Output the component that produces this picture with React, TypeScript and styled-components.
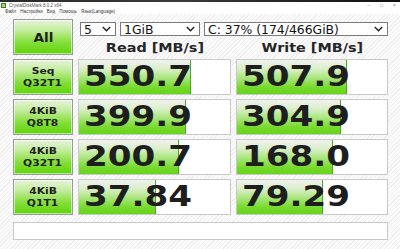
import React from "react";
import styled, { createGlobalStyle } from "styled-components";

const Global = createGlobalStyle`
  html, body { margin: 0; padding: 0; }
  body {
    width: 400px;
    height: 249px;
    overflow: hidden;
    background: #ffffff;
    font-family: "DejaVu Sans", Verdana, sans-serif;
  }
`;

const Window = styled.div`
  width: 400px;
  height: 249px;
  display: flex;
  flex-direction: column;
  background: #ffffff;
  overflow: hidden;
`;

const TopStrip = styled.div`
  height: 2px;
  background: linear-gradient(to right, #2a2a2a, #3a3a3a 45%, #101010);
`;

const TitleBar = styled.div`
  height: 6px;
  display: flex;
  align-items: center;
  padding: 0 4px 0 1px;
  gap: 3px;
  font-family: "Liberation Sans", Arial, sans-serif;
  font-size: 4.5px;
  color: #555;
`;

const TitleText = styled.span`
  flex: 1;
  white-space: nowrap;
`;

const WinControls = styled.div`
  display: flex;
  gap: 10px;
  color: #888;
  font-size: 5px;
`;

const MenuBar = styled.div`
  height: 6px;
  display: flex;
  align-items: center;
  padding-left: 5px;
  gap: 4px;
  font-family: "Liberation Sans", Arial, sans-serif;
  font-size: 4.6px;
  color: #333;
`;

const MenuItem = styled.span`
  white-space: nowrap;
`;

const Main = styled.div`
  flex: 1;
  display: grid;
  grid-template-columns: 60px 153px 152px;
  grid-template-rows: 17px 15px 36px 36px 36px 36px 21px;
  column-gap: 5px;
  row-gap: 4px;
  padding: 5px 12px 0 13px;
  background-color: #f7f7f7;
  background-image: repeating-linear-gradient(
    135deg,
    #fbfbfb 0px,
    #fbfbfb 2px,
    #efefef 2px,
    #efefef 3px
  );
`;

const GreenButton = styled.div<{ $span?: boolean }>`
  grid-row: ${(p) => (p.$span ? "1 / span 2" : "auto")};
  box-sizing: border-box;
  border: 1px solid #9a9a9a;
  box-shadow: inset 0 0 0 1px rgba(255, 255, 255, 0.55);
  background: linear-gradient(
    to bottom,
    #e6f4dc 0%,
    #c4ec9e 30%,
    #86df3c 65%,
    #5fd40a 100%
  );
  display: flex;
  flex-direction: column;
  align-items: center;
  justify-content: center;
  color: #1f1f1f;
  font-weight: bold;
`;

const AllText = styled.span`
  font-size: 13px;
  transform: scaleX(1.05);
`;

const LabelLine = styled.span`
  font-size: 8.6px;
  line-height: 12px;
  transform: scaleX(1.25);
`;

const SelectRow = styled.div`
  grid-column: 2 / span 2;
  display: flex;
  gap: 4px;
  padding: 3px 0 0 2px;
`;

const Select = styled.div<{ $w?: number }>`
  box-sizing: border-box;
  height: 14px;
  ${(p) => (p.$w ? `width: ${p.$w}px;` : "flex: 1;")}
  border: 1px solid #7a7a7a;
  background: #ffffff;
  display: flex;
  align-items: center;
  justify-content: space-between;
  padding: 0 4px 0 3px;
  font-size: 12.4px;
  color: #111;
  white-space: nowrap;
`;

const Header = styled.div`
  display: flex;
  justify-content: center;
  align-items: flex-end;
  font-size: 12px;
  font-weight: bold;
  color: #262626;
  line-height: 14px;
`;

const HeaderText = styled.span`
  display: inline-block;
  transform: scaleX(1.2);
`;

const Cell = styled.div`
  box-sizing: border-box;
  border: 1px solid #c9c9c9;
  background: #ffffff;
  display: grid;
  overflow: hidden;
`;

const Bar = styled.div`
  grid-area: 1 / 1;
  box-sizing: border-box;
  height: 100%;
  border-right: 1px solid #4aa81c;
  background: linear-gradient(
    to bottom,
    #f0f2ee 0%,
    #dcefcc 25%,
    #aae67e 52%,
    #78da2e 80%,
    #66d51a 100%
  );
`;

const Value = styled.div`
  grid-area: 1 / 1;
  align-self: center;
  padding-left: 4px;
  font-size: 28px;
  font-weight: bold;
  color: #1e1e1e;
  line-height: 30px;
  transform: scaleX(1.22);
  transform-origin: left center;
  white-space: nowrap;
`;

const Comment = styled.div`
  grid-column: 1 / span 3;
  margin-top: 3px;
  box-sizing: border-box;
  border: 1px solid #c9c9c9;
  background: #ffffff;
`;

const Chevron = () => (
  <svg width="9" height="6" viewBox="0 0 9 6">
    <polyline
      points="0.8,1 4.5,4.8 8.2,1"
      fill="none"
      stroke="#1a1a1a"
      strokeWidth="1.3"
    />
  </svg>
);

const AppIcon = () => (
  <svg width="5" height="5" viewBox="0 0 5 5">
    <rect x="0" y="0" width="5" height="5" fill="#3b7d2a" />
    <rect x="1" y="1" width="3" height="3" fill="#9ede6a" />
  </svg>
);

type Row = {
  l1: string;
  l2: string;
  read: string;
  readPct: number;
  write: string;
  writePct: number;
};

const rows: Row[] = [
  { l1: "Seq", l2: "Q32T1", read: "550.7", readPct: 74, write: "507.9", writePct: 73 },
  { l1: "4KiB", l2: "Q8T8", read: "399.9", readPct: 71, write: "304.9", writePct: 69 },
  { l1: "4KiB", l2: "Q32T1", read: "200.7", readPct: 66, write: "168.0", writePct: 64 },
  { l1: "4KiB", l2: "Q1T1", read: "37.84", readPct: 51, write: "79.29", writePct: 57 },
];

export default function App() {
  return (
    <Window>
      <Global />
      <TopStrip />
      <TitleBar>
        <AppIcon />
        <TitleText>CrystalDiskMark 8.0.2 x64</TitleText>
        <WinControls>
          <span>–</span>
          <span>□</span>
          <span>×</span>
        </WinControls>
      </TitleBar>
      <MenuBar>
        <MenuItem>Файл</MenuItem>
        <MenuItem>Настройки</MenuItem>
        <MenuItem>Вид</MenuItem>
        <MenuItem>Помощь</MenuItem>
        <MenuItem>Язык(Language)</MenuItem>
      </MenuBar>
      <Main>
        <GreenButton $span>
          <AllText>All</AllText>
        </GreenButton>
        <SelectRow>
          <Select $w={36}>
            <span>5</span>
            <Chevron />
          </Select>
          <Select $w={80}>
            <span>1GiB</span>
            <Chevron />
          </Select>
          <Select>
            <span>C: 37% (174/466GiB)</span>
            <Chevron />
          </Select>
        </SelectRow>
        <Header>
          <HeaderText>Read [MB/s]</HeaderText>
        </Header>
        <Header>
          <HeaderText>Write [MB/s]</HeaderText>
        </Header>
        {rows.map((r) => (
          <React.Fragment key={r.l2 + r.read}>
            <GreenButton>
              <LabelLine>{r.l1}</LabelLine>
              <LabelLine>{r.l2}</LabelLine>
            </GreenButton>
            <Cell>
              <Bar style={{ width: `${r.readPct}%` }} />
              <Value>{r.read}</Value>
            </Cell>
            <Cell>
              <Bar style={{ width: `${r.writePct}%` }} />
              <Value>{r.write}</Value>
            </Cell>
          </React.Fragment>
        ))}
        <Comment />
      </Main>
    </Window>
  );
}
